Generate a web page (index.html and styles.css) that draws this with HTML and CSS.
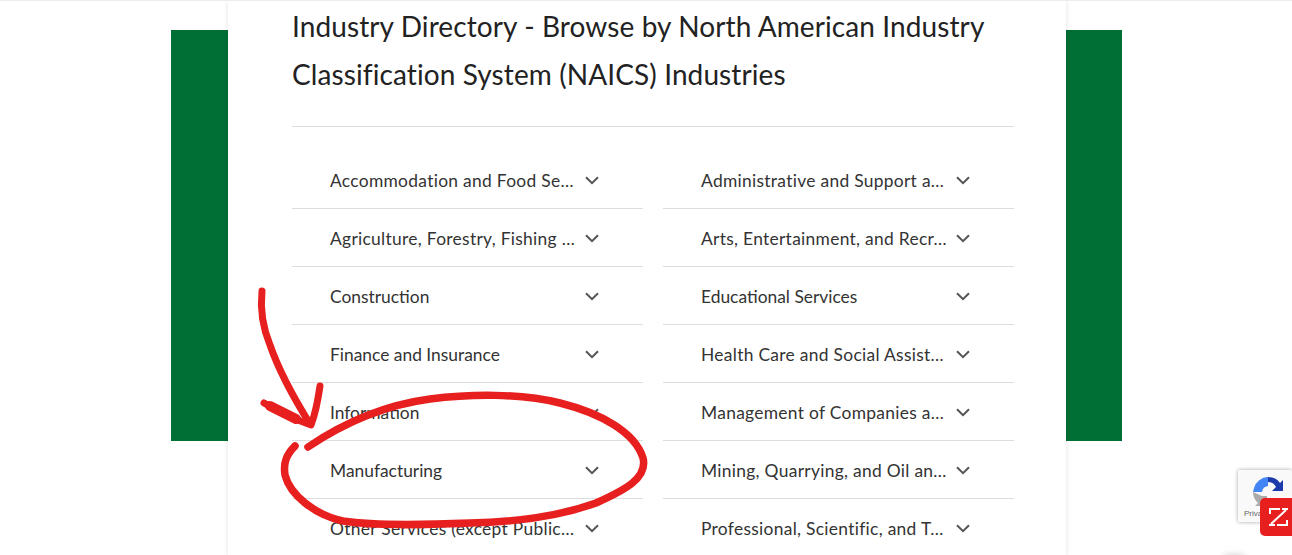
FILE: index.html
```html
<!DOCTYPE html>
<html lang="en">
<head>
    <meta charset="UTF-8">
    <title>Industry Directory</title>
    <link rel="stylesheet" href="styles.css">
</head>
<body>
    <svg width="0" height="0" class="defs">
        <symbol id="chevron" viewBox="0 0 14 9">
            <path d="M1 1.2l6 6 6-6" fill="none" stroke="#555" stroke-width="2"/>
        </symbol>
    </svg>

    <div class="stage">
        <div class="green-band"></div>
        <div class="card">
            <h1>Industry Directory - Browse by North American Industry Classification System (NAICS) Industries</h1>
            <div class="industry-grid">
                <div class="industry"><span class="long">Accommodation and Food Se…</span><svg class="chev"><use href="#chevron"/></svg></div>
                <div class="industry"><span class="long">Administrative and Support a…</span><svg class="chev"><use href="#chevron"/></svg></div>
                <div class="industry"><span class="long">Agriculture, Forestry, Fishing …</span><svg class="chev"><use href="#chevron"/></svg></div>
                <div class="industry"><span class="long">Arts, Entertainment, and Recr…</span><svg class="chev"><use href="#chevron"/></svg></div>
                <div class="industry"><span>Construction</span><svg class="chev"><use href="#chevron"/></svg></div>
                <div class="industry"><span>Educational Services</span><svg class="chev"><use href="#chevron"/></svg></div>
                <div class="industry"><span>Finance and Insurance</span><svg class="chev"><use href="#chevron"/></svg></div>
                <div class="industry"><span class="long">Health Care and Social Assist…</span><svg class="chev"><use href="#chevron"/></svg></div>
                <div class="industry"><span>Information</span><svg class="chev"><use href="#chevron"/></svg></div>
                <div class="industry"><span class="long">Management of Companies a…</span><svg class="chev"><use href="#chevron"/></svg></div>
                <div class="industry"><span>Manufacturing</span><svg class="chev"><use href="#chevron"/></svg></div>
                <div class="industry"><span class="long">Mining, Quarrying, and Oil an…</span><svg class="chev"><use href="#chevron"/></svg></div>
                <div class="industry"><span class="long">Other Services (except Public…</span><svg class="chev"><use href="#chevron"/></svg></div>
                <div class="industry"><span class="long">Professional, Scientific, and T…</span><svg class="chev"><use href="#chevron"/></svg></div>
            </div>
        </div>

        <!-- hand drawn arrow and circle -->
        <svg class="scribble" width="1292" height="555" viewBox="0 0 1292 555">
            <g fill="none" stroke="#e71f1f" stroke-linecap="round" stroke-linejoin="round">
                <path stroke-width="7" d="M262 291C260 310 263 328 270 345C278 368 290 392 310 424"/>
                <path stroke-width="7" d="M320 386C318 400 316 412 311 425C296 420 280 412 264 403"/>
                <path stroke-width="10" d="M270 406L296 419"/>
                <path stroke-width="7.5" d="M308 447C345 422 385 405 430 399C470 394 520 393 560 403C600 413 635 432 643 458C648 478 625 490 596 503C560 516 520 522 470 523C420 525 375 526 343 521C315 515 290 495 285 475C283 462 287 454 295 446"/>
            </g>
        </svg>

        <div class="recaptcha">
            <svg width="32" height="32" viewBox="0 0 32 32">
                <path d="M16 1a15 15 0 0 1 12 6l3-3v11H20l4-4a9 9 0 0 0-8-5z" fill="#1c3aa9"/>
                <path d="M16 1A15 15 0 0 0 2 12l-1 4h9a7 7 0 0 1 6-6z" fill="#4285f4"/>
                <path d="M1 16a15 15 0 0 0 5 11l-3 3h12V20H10z" fill="#ababab"/>
            </svg>
            <span class="privacy">Privacy</span>
        </div>
        <div class="zoho-btn">
            <svg width="19" height="18" viewBox="0 0 19 18">
                <path d="M1 6V1h10M13 1h5v1M18 12v5H8M6 17H1v-1M17 2L2 16" fill="none" stroke="#fff" stroke-width="2"/>
            </svg>
        </div>
        <div class="chat-shadow"></div>
    </div>
</body>
</html>
```
FILE: styles.css
```css
html, body {
    margin: 0;
    padding: 0;
    background-color: #fff;
}
.defs {
    display: block;
}
.stage {
    position: relative;
    height: 554px;
    overflow: hidden;
    border-top: 1px solid #e8edf0;
    display: grid;
    grid-template-columns: 1fr;
    font-family: "Lato", sans-serif;
}
.green-band {
    grid-area: 1 / 1;
    width: 951px;
    height: 411px;
    margin: 29px 0 0 171px;
    background-color: #006f35;
}
.card {
    grid-area: 1 / 1;
    width: 722px;
    height: 554px;
    margin-left: 228px;
    padding: 1px 52px 0 64px;
    background-color: #fff;
    box-shadow: 0 0 5px rgba(0,0,0,0.12);
}
h1 {
    margin: 0;
    padding-bottom: 28px;
    border-bottom: 1px solid #ddd;
    font-size: 28px;
    font-weight: 400;
    letter-spacing: 0.1px;
    line-height: 48px;
    color: #222;
}
.industry-grid {
    display: grid;
    grid-template-columns: 351px 351px;
    column-gap: 20px;
    margin-top: 24px;
}
.industry {
    display: flex;
    align-items: center;
    height: 55px;
    padding: 2px 44px 0 38px;
    border-bottom: 1px solid #ddd;
    font-size: 17.4px;
    color: #333;
}
.industry span {
    flex: 1;
    min-width: 0;
    white-space: nowrap;
}
.industry .long {
    letter-spacing: 0.3px;
}
.chev {
    flex: none;
    width: 14px;
    height: 9px;
    margin-left: 8px;
}
.scribble {
    position: absolute;
    left: 0;
    top: -1px;
    pointer-events: none;
}
.recaptcha {
    position: absolute;
    left: 1238px;
    top: 469px;
    width: 54px;
    height: 52px;
    background-color: #f9f9f9;
    box-shadow: 0 0 4px rgba(0,0,0,0.35);
    border-radius: 2px;
}
.recaptcha svg {
    display: block;
    margin: 6px 0 0 14px;
}
.privacy {
    display: block;
    margin: 1px 0 0 6px;
    font-family: "Liberation Sans", sans-serif;
    font-size: 8px;
    color: #666;
}
.zoho-btn {
    position: absolute;
    left: 1260px;
    top: 497px;
    width: 40px;
    height: 38px;
    display: flex;
    align-items: center;
    padding-left: 9px;
    box-sizing: border-box;
    background-color: #e81f1f;
    border-radius: 5px;
}
.chat-shadow {
    position: absolute;
    left: 1222px;
    top: 554px;
    width: 24px;
    height: 4px;
    border-radius: 50%;
    box-shadow: 0 0 6px rgba(0,0,0,0.25);
}
```
